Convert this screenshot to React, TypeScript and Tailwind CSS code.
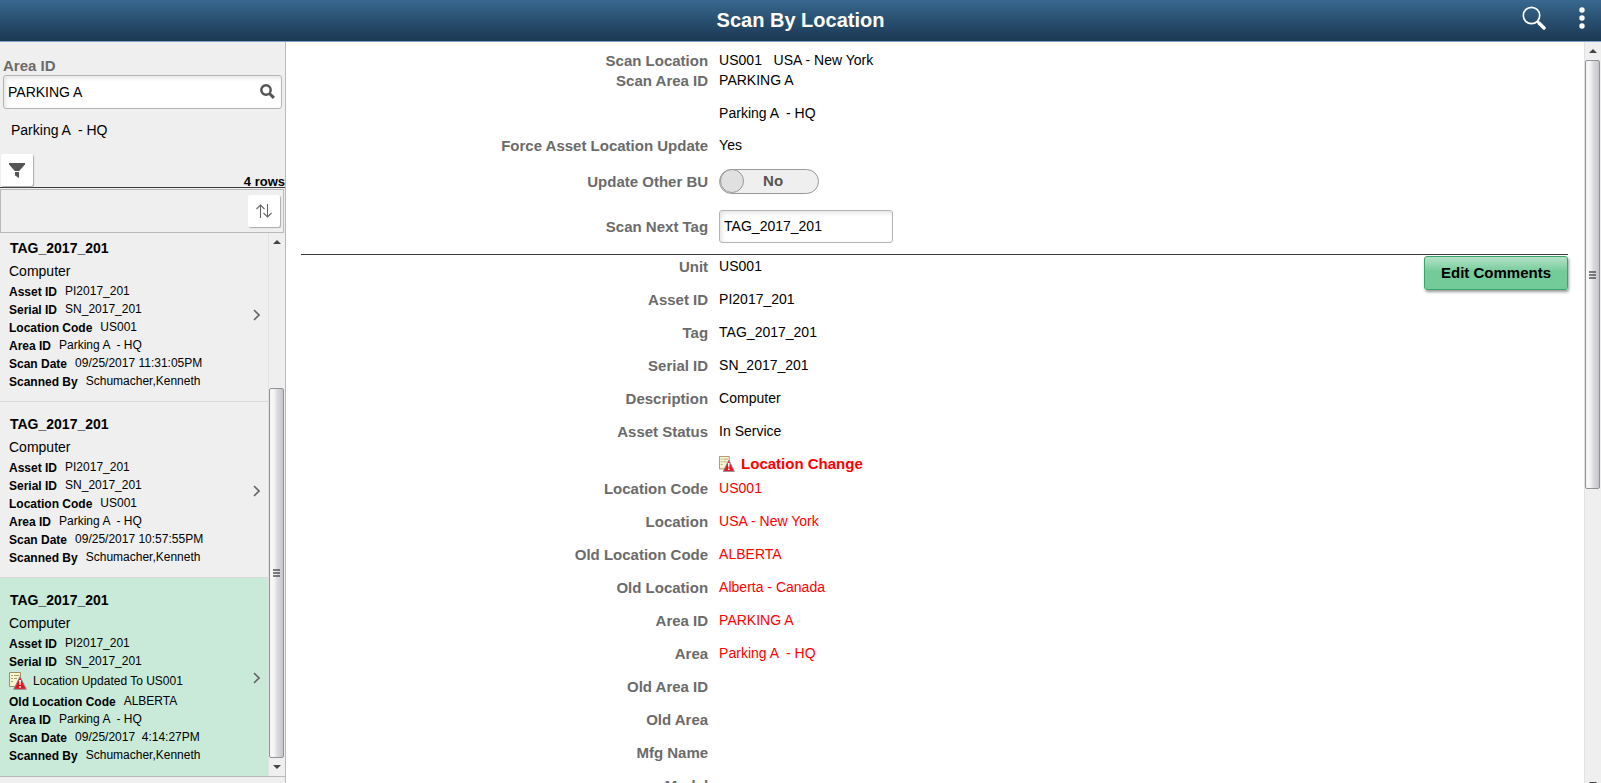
/**
 * Scan By Location: scanned asset list on the left, details of the
 * selected scan on the right.
 */

import { useState } from 'react'
import type { ReactNode } from 'react'
import clsx from 'clsx'

type Field = { label: string; value: string }

type Scan = {
  id: number
  tag: string
  description: string
  fields: Field[]
  notice?: string
  trailing: Field[]
}

const SCANS: Scan[] = [
  {
    id: 1,
    tag: 'TAG_2017_201',
    description: 'Computer',
    fields: [
      { label: 'Asset ID', value: 'PI2017_201' },
      { label: 'Serial ID', value: 'SN_2017_201' },
    ],
    trailing: [
      { label: 'Location Code', value: 'US001' },
      { label: 'Area ID', value: 'Parking A  - HQ' },
      { label: 'Scan Date', value: '09/25/2017 11:31:05PM' },
      { label: 'Scanned By', value: 'Schumacher,Kenneth' },
    ],
  },
  {
    id: 2,
    tag: 'TAG_2017_201',
    description: 'Computer',
    fields: [
      { label: 'Asset ID', value: 'PI2017_201' },
      { label: 'Serial ID', value: 'SN_2017_201' },
    ],
    trailing: [
      { label: 'Location Code', value: 'US001' },
      { label: 'Area ID', value: 'Parking A  - HQ' },
      { label: 'Scan Date', value: '09/25/2017 10:57:55PM' },
      { label: 'Scanned By', value: 'Schumacher,Kenneth' },
    ],
  },
  {
    id: 3,
    tag: 'TAG_2017_201',
    description: 'Computer',
    fields: [
      { label: 'Asset ID', value: 'PI2017_201' },
      { label: 'Serial ID', value: 'SN_2017_201' },
    ],
    notice: 'Location Updated To US001',
    trailing: [
      { label: 'Old Location Code', value: 'ALBERTA' },
      { label: 'Area ID', value: 'Parking A  - HQ' },
      { label: 'Scan Date', value: '09/25/2017  4:14:27PM' },
      { label: 'Scanned By', value: 'Schumacher,Kenneth' },
    ],
  },
]

const ASSET: Field[] = [
  { label: 'Asset ID', value: 'PI2017_201' },
  { label: 'Tag', value: 'TAG_2017_201' },
  { label: 'Serial ID', value: 'SN_2017_201' },
  { label: 'Description', value: 'Computer' },
  { label: 'Asset Status', value: 'In Service' },
]

const CHANGES: Field[] = [
  { label: 'Location Code', value: 'US001' },
  { label: 'Location', value: 'USA - New York' },
  { label: 'Old Location Code', value: 'ALBERTA' },
  { label: 'Old Location', value: 'Alberta - Canada' },
  { label: 'Area ID', value: 'PARKING A' },
  { label: 'Area', value: 'Parking A  - HQ' },
  { label: 'Old Area ID', value: '' },
  { label: 'Old Area', value: '' },
  { label: 'Mfg Name', value: '' },
  { label: 'Model', value: '' },
]

// Notepad with a red warning triangle over its corner
function WarningIcon({ className }: { className: string }) {
  return (
    <svg viewBox="0 0 18 18" className={className} aria-hidden="true">
      <path d="M.5.5h11v14H.5z" fill="#fbf5cf" stroke="#a08c5c" />
      <path d="M2 3.5h2M5 3.5h5M2 6.5h2M5 6.5h3M2 9.5h2" stroke="#a89c74" />
      <path d="M11 4.5 17.3 17.3H4.7z" fill="#f0121a" stroke="#8a929c" strokeLinejoin="round" />
      <path d="M10 8h2l-.4 5h-1.2zM10.1 14h1.8v1.8h-1.8z" fill="#fff" />
    </svg>
  )
}

function Scrollbar({ thumb, align, clipped }: { thumb: string; align: string; clipped?: boolean }) {
  return (
    <div className="flex w-[17px] shrink-0 flex-col border-l border-[#e2e2e2] bg-[#efefef] pr-px" aria-hidden="true">
      <div className="flex h-[18px] shrink-0 items-center justify-center">
        <svg viewBox="0 0 8 4" className="h-1 w-2"><path d="M4 0 8 4H0z" fill="#444" /></svg>
      </div>
      <div className={clsx('flex min-h-0 flex-1 flex-col', align)}>
        <div className={clsx('flex items-center justify-center rounded-[2px] border border-[#929296] bg-linear-to-r from-[#f6f6f6] from-30% via-[#dcdce0] via-55% to-[#c4c4ca]', thumb)}>
          <svg viewBox="0 0 7 8" className="h-2 w-[7px]">
            <path d="M0 1h7M0 4h7M0 7h7" stroke="#555" strokeWidth="1.4" />
          </svg>
        </div>
      </div>
      <div className={clsx('flex h-[18px] shrink-0 items-center justify-center', clipped && '-mb-[10px]')}>
        <svg viewBox="0 0 8 4" className="h-1 w-2"><path d="M0 0h8L4 4z" fill="#444" /></svg>
      </div>
    </div>
  )
}

function ScanField({ field }: { field: Field }) {
  return (
    <div className="flex h-[18px] items-center gap-2 text-xs">
      <span className="pt-px font-bold">{field.label}</span>
      <span className="whitespace-pre">{field.value}</span>
    </div>
  )
}

function ScanItem({ scan, selected, onSelect }: { scan: Scan; selected: boolean; onSelect: () => void }) {
  return (
    <li className="shrink-0">
      <button
        type="button"
        onClick={onSelect}
        className={clsx(
          'flex w-full items-center border-b py-[11px] pr-2 pl-[9px] text-left text-black',
          selected ? 'border-[#c9ead8] bg-[#c9ead8]' : 'border-[#d9d9d9]',
        )}
      >
        <div className="min-w-0 flex-1">
          <div className="h-[22px] pl-px text-sm leading-[22px] font-bold">{scan.tag}</div>
          <div className="h-[23px] text-sm leading-6">{scan.description}</div>
          {scan.fields.map((f) => <ScanField key={f.label} field={f} />)}
          {scan.notice && (
            <div className="flex h-[22px] items-center gap-[6px] text-xs">
              <WarningIcon className="size-[18px]" />
              {scan.notice}
            </div>
          )}
          {scan.trailing.map((f) => <ScanField key={f.label} field={f} />)}
        </div>
        <svg viewBox="0 0 7 14" className="h-[14px] w-[7px]" fill="none" stroke="#666" strokeWidth="1.6">
          <path d="M1 3l5 5-5 5" />
        </svg>
      </button>
    </li>
  )
}

function Row({ label, htmlFor, className, children }: { label?: string; htmlFor?: string; className: string; children?: ReactNode }) {
  return (
    <div className={clsx('flex shrink-0 leading-5', className)}>
      <div className="w-[33%] shrink-0 pt-px pr-[11px] text-right text-[15px] leading-5 font-bold text-[#6b6b6b]">
        {htmlFor ? <label htmlFor={htmlFor}>{label}</label> : label}
      </div>
      {children}
    </div>
  )
}

export default function App() {
  const [area, setArea] = useState('PARKING A')
  const [tag, setTag] = useState('TAG_2017_201')
  const [otherBu, setOtherBu] = useState(false)
  const [selected, setSelected] = useState(3)

  return (
    <div className="flex h-screen flex-col overflow-hidden bg-white font-['Liberation_Sans',Arial,sans-serif] text-sm text-black">
      <header className="grid h-[42px] shrink-0 grid-cols-[1fr_auto_1fr] items-center border-b border-[#7fa3cc] bg-linear-to-b from-[#38688f] to-[#1a3852] pb-0.5 text-white">
        <h1 className="col-start-2 text-xl font-bold">Scan By Location</h1>
        <div className="flex items-center justify-end gap-[33px] pr-4 pb-[3px]">
          <button type="button" aria-label="Search">
            <svg viewBox="0 0 24 24" className="size-6" fill="none" stroke="#fff">
              <circle cx="9.5" cy="9.5" r="8.2" strokeWidth="1.7" />
              <path d="M15.5 15.5l1.5 1.5" strokeWidth="2" />
              <path d="M17 17l5 5" strokeWidth="3.4" strokeLinecap="round" />
            </svg>
          </button>
          <button type="button" aria-label="Actions">
            <svg viewBox="0 0 6 22" className="h-[22px] w-[6px]" fill="#fff">
              <circle cx="3" cy="3" r="2.7" />
              <circle cx="3" cy="11" r="2.7" />
              <circle cx="3" cy="19" r="2.7" />
            </svg>
          </button>
        </div>
      </header>

      <div className="flex min-h-0 flex-1">
        <aside className="flex w-[286px] shrink-0 flex-col border-r border-[#b9b9bb] bg-[#efefef]">
          <div className="px-[3px] pt-[15px]">
            <label htmlFor="area" className="block text-[15px] leading-[18px] font-bold text-[#6b6b6b]">Area ID</label>
            <div className="flex h-[34px] items-center rounded-[3px] border border-[#b4b4b4] bg-white pr-[6px] pb-px shadow-[inset_2px_2px_4px_#e4e4e4]">
              <input
                id="area"
                value={area}
                onChange={(e) => setArea(e.target.value)}
                className="h-full min-w-0 flex-1 bg-transparent pl-1 outline-none"
              />
              <button type="button" aria-label="Look up Area ID">
                <svg viewBox="0 0 15 15" className="size-[15px]" fill="none" stroke="#555">
                  <circle cx="6" cy="6" r="4.7" strokeWidth="2.4" />
                  <path d="M9.7 9.7l4.2 4.2" strokeWidth="3" />
                </svg>
              </button>
            </div>
            <p className="pt-[9px] pl-2 leading-6 whitespace-pre">Parking A  - HQ</p>
          </div>

          <div className="mt-3 flex items-end justify-between border-b border-[#3c3c3c] pl-px">
            <button type="button" aria-label="Filter" className="mb-px flex h-8 w-8 items-center justify-center rounded-[2px] bg-white shadow-[1px_1px_1px_#aaa]">
              <svg viewBox="0 0 16 15" className="h-[15px] w-4" fill="#555">
                <path d="M0 0h16v1.5L10.2 8H5.8L0 1.5zM6 9h4v6L6 12.5z" />
              </svg>
            </button>
            <span className="text-[13px] leading-[10px] font-bold">4 rows</span>
          </div>
          <div className="mt-px mr-px flex h-11 shrink-0 items-center justify-end border border-[#b9b9bb] pr-[3px]">
            <button type="button" aria-label="Sort" className="flex size-8 items-center justify-center rounded-[2px] bg-white shadow-[1px_1px_1px_#aaa]">
              <svg viewBox="0 0 16 14" className="h-[14px] w-4" fill="none" stroke="#666" strokeWidth="1.1">
                <path d="M4.5 14V1M.5 5l4-4 4 4M11.5 0v13M7.5 9l4 4 4-4" />
              </svg>
            </button>
          </div>

          <div className="mb-[6px] flex min-h-0 flex-1 border-b border-[#b9b9bb]">
            <ul className="flex min-w-0 flex-1 flex-col justify-end overflow-hidden">
              {SCANS.map((s) => (
                <ScanItem key={s.id} scan={s} selected={s.id === selected} onSelect={() => setSelected(s.id)} />
              ))}
            </ul>
            <Scrollbar thumb="h-[73%]" align="justify-end" />
          </div>
        </aside>

        <main className="flex min-w-0 flex-1 flex-col overflow-hidden pt-2 pr-4 pl-[15px]">
          <Row label="Scan Location" className="h-5">
            <span className="whitespace-pre">US001   USA - New York</span>
          </Row>
          <Row label="Scan Area ID" className="h-[33px]">PARKING A</Row>
          <Row className="h-8"><span className="whitespace-pre">Parking A  - HQ</span></Row>
          <Row label="Force Asset Location Update" className="h-[26px]">Yes</Row>
          <Row label="Update Other BU" htmlFor="other-bu" className="h-10 items-center">
            <button
              id="other-bu"
              type="button"
              role="switch"
              aria-checked={otherBu}
              onClick={() => setOtherBu(!otherBu)}
              className={clsx(
                'flex h-[25px] w-[100px] items-center rounded-full border border-[#999] bg-[#efefef] text-[15px] font-bold text-[#555]',
                otherBu && 'flex-row-reverse',
              )}
            >
              <span className="size-6 shrink-0 rounded-full border border-[#999] bg-[#e0e0e0]" />
              <span className="flex-1 pr-4 text-center">{otherBu ? 'Yes' : 'No'}</span>
            </button>
          </Row>
          <Row label="Scan Next Tag" htmlFor="next-tag" className="h-[50px] items-center">
            <input
              id="next-tag"
              value={tag}
              onChange={(e) => setTag(e.target.value)}
              className="h-[33px] w-[174px] rounded-[3px] border border-[#b4b4b4] pl-1 shadow-[inset_2px_2px_4px_#e4e4e4] outline-none"
            />
          </Row>

          <hr className="mt-[3px] mb-px shrink-0 border-t border-[#3c3c3c]" />
          <Row label="Unit" className="h-[33px]">
            <span className="flex-1">US001</span>
            <button
              type="button"
              className="h-[34px] w-[144px] shrink-0 rounded-[3px] border border-[#35a56c] bg-linear-to-b from-[#b4e2c9] to-[#74cb9a] to-45% text-[15px] font-bold shadow-[1px_2px_3px_#999]"
            >
              Edit Comments
            </button>
          </Row>
          {ASSET.map((f) => <Row key={f.label} label={f.label} className="h-[33px]">{f.value}</Row>)}
          <Row className="h-6">
            <h2 className="flex h-5 items-center gap-[6px] text-[15px] font-bold text-[#f00]">
              <WarningIcon className="size-4" />
              Location Change
            </h2>
          </Row>
          {CHANGES.map((f) => (
            <Row key={f.label} label={f.label} className="h-[33px]">
              <span className="whitespace-pre text-[#f00]">{f.value}</span>
            </Row>
          ))}
        </main>
        <Scrollbar thumb="h-[60%]" align="justify-start" clipped />
      </div>
    </div>
  )
}
